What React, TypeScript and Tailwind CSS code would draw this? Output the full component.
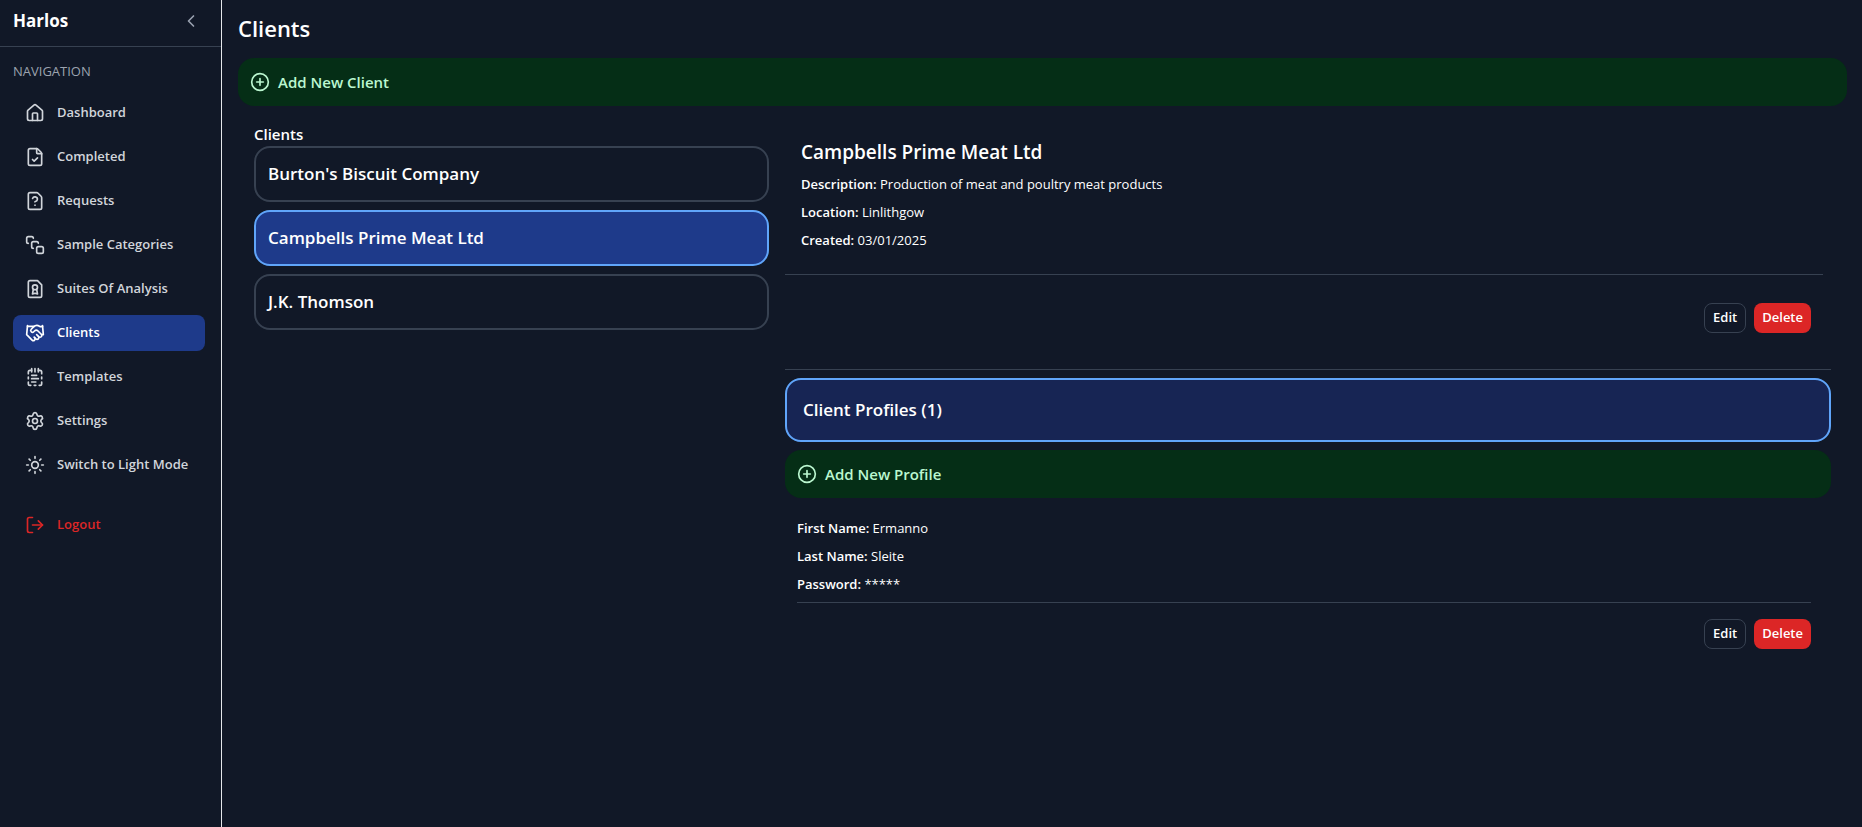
import { useState } from "react";
import {
  ChevronLeft,
  CirclePlus,
  FileCheck,
  FileQuestionMark,
  House,
  LogOut,
  NotepadTextDashed,
  Settings,
  SquareStack,
  Sun,
} from "lucide-react";
import type { ReactNode } from "react";
import clsx from "clsx";

interface NavItem {
  label: string;
  icon: ReactNode;
}

interface Client {
  id: number;
  name: string;
  description: string;
  location: string;
  created: string;
}

const FileBadgeIcon = () => (
  <svg
    className="h-5 w-5"
    viewBox="0 0 24 24"
    fill="none"
    stroke="currentColor"
    strokeWidth="2"
    strokeLinecap="round"
    strokeLinejoin="round"
  >
    <path d="M15 2H6a2 2 0 0 0-2 2v16a2 2 0 0 0 2 2h12a2 2 0 0 0 2-2V7Z" />
    <circle cx="12" cy="10" r="3" />
    <path d="m14 12.5 1 5.5-3-1-3 1 1-5.5" />
  </svg>
);

const HandshakeIcon = () => (
  <svg
    className="h-5 w-5"
    viewBox="0 0 24 24"
    fill="none"
    stroke="currentColor"
    strokeWidth="2"
    strokeLinecap="round"
    strokeLinejoin="round"
  >
    <path d="m11 17 2 2a1 1 0 1 0 3-3" />
    <path d="m14 14 2.5 2.5a1 1 0 1 0 3-3l-3.88-3.88a3 3 0 0 0-4.24 0l-.88.88a1 1 0 1 1-3-3l2.81-2.81a5.79 5.79 0 0 1 7.06-.87l.47.28a2 2 0 0 0 1.42.25L21 4" />
    <path d="m21 3 1 11h-2" />
    <path d="M3 3 2 14l6.5 6.5a1 1 0 1 0 3-3" />
    <path d="M3 4h8" />
  </svg>
);

const navItems: NavItem[] = [
  { label: "Dashboard", icon: <House className="h-5 w-5" /> },
  { label: "Completed", icon: <FileCheck className="h-5 w-5" /> },
  { label: "Requests", icon: <FileQuestionMark className="h-5 w-5" /> },
  { label: "Sample Categories", icon: <SquareStack className="h-5 w-5" /> },
  { label: "Suites Of Analysis", icon: <FileBadgeIcon /> },
  { label: "Clients", icon: <HandshakeIcon /> },
  { label: "Templates", icon: <NotepadTextDashed className="h-5 w-5" /> },
  { label: "Settings", icon: <Settings className="h-5 w-5" /> },
];

const clients: Client[] = [
  {
    id: 1,
    name: "Burton's Biscuit Company",
    description: "Biscuit manufacturing",
    location: "Edinburgh",
    created: "03/01/2025",
  },
  {
    id: 2,
    name: "Campbells Prime Meat Ltd",
    description: "Production of meat and poultry meat products",
    location: "Linlithgow",
    created: "03/01/2025",
  },
  {
    id: 3,
    name: "J.K. Thomson",
    description: "Bakery",
    location: "Glasgow",
    created: "03/01/2025",
  },
];

const Sidebar = () => (
  <aside className="flex w-[222px] shrink-0 flex-col border-r border-gray-200">
    <div className="flex h-[47px] items-center justify-between border-b border-[#374151] pr-5 pb-1 pl-[13px]">
      <span className="text-[17px] font-bold">Harlos</span>
      <button type="button" aria-label="Collapse sidebar" className="text-gray-400">
        <ChevronLeft className="h-5 w-5" />
      </button>
    </div>
    <nav className="flex flex-col gap-2 pt-4 pr-4 pl-[13px] text-[13px] font-semibold text-[#d1d5db]">
      <h2 className="mb-2 leading-4 font-normal text-[#9ca3af] uppercase">Navigation</h2>
      {navItems.map((item) => (
        <a
          key={item.label}
          href="#"
          className={clsx(
            "flex h-9 items-center gap-3 rounded-lg px-3",
            item.label === "Clients" ? "bg-[#1e3a8a] text-white" : "hover:bg-gray-800"
          )}
        >
          {item.icon}
          {item.label}
        </a>
      ))}
      <button type="button" className="flex h-9 items-center gap-3 rounded-lg px-3">
        <Sun className="h-5 w-5" />
        Switch to Light Mode
      </button>
      <button
        type="button"
        className="mt-4 flex h-9 items-center gap-3 rounded-lg px-3 text-[#dc2626]"
      >
        <LogOut className="h-5 w-5" />
        Logout
      </button>
    </nav>
  </aside>
);

const AddButton = ({ label }: { label: string }) => (
  <button
    type="button"
    className="flex h-12 w-full items-center gap-2 rounded-2xl bg-[#052e16] px-3 text-[15px] font-semibold text-[#bbf7d0]"
  >
    <CirclePlus className="h-5 w-5" />
    {label}
  </button>
);

const Field = ({ label, value }: { label: string; value: string }) => (
  <p>
    <span className="font-semibold">{label}:</span> {value}
  </p>
);

const RowActions = () => (
  <div className="flex justify-end gap-2 text-[13px] font-semibold">
    <button type="button" className="h-[30px] rounded-lg border border-[#374151] px-2">
      Edit
    </button>
    <button type="button" className="h-[30px] rounded-lg bg-[#dc2626] px-2">
      Delete
    </button>
  </div>
);

export default function App() {
  const [selectedId, setSelectedId] = useState(2);
  const selected = clients.find((c) => c.id === selectedId) ?? clients[0];

  return (
    <div className="flex min-h-screen bg-[#111827] font-['Open_Sans',sans-serif] text-white">
      <Sidebar />
      <main className="min-w-0 flex-1 pt-3 pr-[15px] pl-4">
        <h1 className="text-[22px] leading-8 font-semibold">Clients</h1>
        <div className="mt-[14px]">
          <AddButton label="Add New Client" />
        </div>
        <div className="grid grid-cols-3 gap-4 px-4 pt-4">
          <section>
            <h2 className="text-[15px] leading-6 font-semibold">Clients</h2>
            <ul className="flex flex-col gap-2">
              {clients.map((client) => (
                <li key={client.id}>
                  <button
                    type="button"
                    onClick={() => setSelectedId(client.id)}
                    className={clsx(
                      "h-14 w-full rounded-2xl border-2 px-3 text-left text-[17px] font-semibold",
                      client.id === selectedId
                        ? "border-[#60a5fa] bg-[#1e3a8a]"
                        : "border-[#374151]"
                    )}
                  >
                    {client.name}
                  </button>
                </li>
              ))}
            </ul>
          </section>
          <section className="col-span-2">
            <div className="mr-2 flex flex-col gap-2 border-b border-[#374151] px-4 pt-4 pb-6 text-[13px] leading-5">
              <h2 className="text-[19px] leading-7 font-semibold">{selected.name}</h2>
              <Field label="Description" value={selected.description} />
              <Field label="Location" value={selected.location} />
              <Field label="Created" value={selected.created} />
            </div>
            <div className="border-b border-[#374151] pt-7 pr-5 pb-9">
              <RowActions />
            </div>
            <div className="mt-2 flex flex-col gap-2">
              <button
                type="button"
                className="h-16 w-full rounded-2xl border-2 border-[#60a5fa] bg-[#172554] px-4 text-left text-[17px] font-semibold"
              >
                Client Profiles (1)
              </button>
              <AddButton label="Add New Profile" />
            </div>
            <div className="pt-5 pr-5 pl-3">
              <div className="mb-4 flex flex-col gap-2 border-b border-[#374151] pb-2 text-[13px] leading-5">
                <Field label="First Name" value="Ermanno" />
                <Field label="Last Name" value="Sleite" />
                <Field label="Password" value="*****" />
              </div>
              <RowActions />
            </div>
          </section>
        </div>
      </main>
    </div>
  );
}
